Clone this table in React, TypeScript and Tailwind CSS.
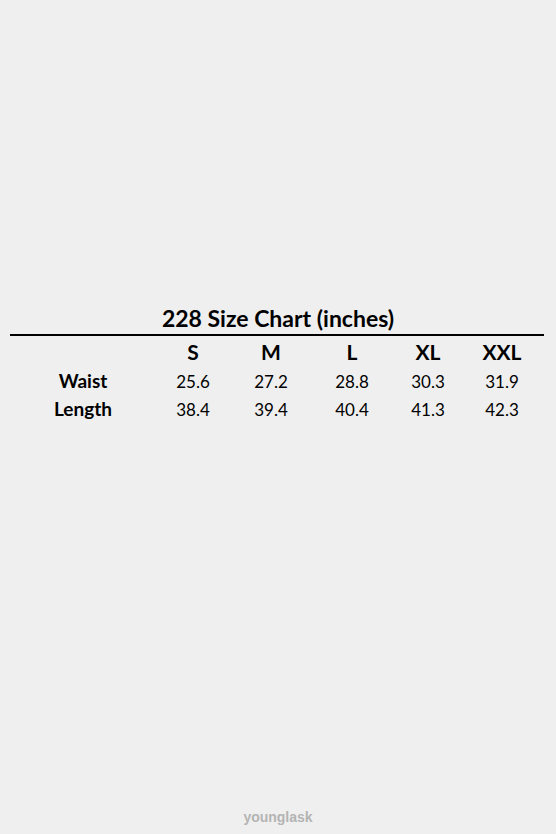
const sizes = ['S', 'M', 'L', 'XL', 'XXL'];

const rows = [
  { label: 'Waist', values: ['25.6', '27.2', '28.8', '30.3', '31.9'] },
  { label: 'Length', values: ['38.4', '39.4', '40.4', '41.3', '42.3'] },
];

const cols = 'grid grid-cols-[146px_74px_82px_80px_72px_76px]';

export default function App() {
  return (
    <div className="h-[834px] w-[556px] bg-[#efefef] flex flex-col font-['Lato',sans-serif] text-black">
      <div className="pt-[305px] px-[10px]">
        <h1 className="text-center text-[23px] leading-[26px] font-bold">228 Size Chart (inches)</h1>
        <div className="mt-[3px] h-[2px] w-[534px] bg-black" />
        <div className={`${cols} mt-0 h-[30px] items-center text-[21px] font-bold`}>
          <div />
          {sizes.map((s) => (
            <div key={s} className="text-center">{s}</div>
          ))}
        </div>
        <div className="mt-[1px]">
          {rows.map((r) => (
            <div key={r.label} className={`${cols} h-[28px] items-center text-[17px]`}>
              <div className="text-center font-bold text-[19px]">{r.label}</div>
              {r.values.map((v, i) => (
                <div key={i} className="text-center">{v}</div>
              ))}
            </div>
          ))}
        </div>
      </div>
      <div className="mt-auto pb-[6px] text-center text-[14px] font-bold text-[#b4b4b4] font-['Liberation_Sans',sans-serif]">
        younglask
      </div>
    </div>
  );
}
